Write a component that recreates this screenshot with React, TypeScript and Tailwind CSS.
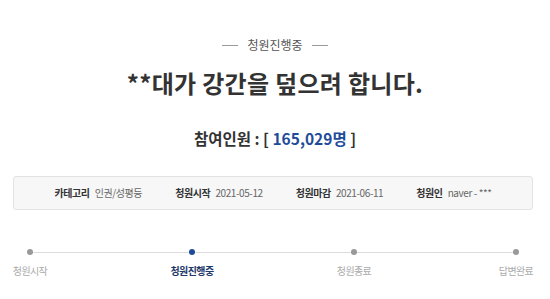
import React from "react";

const font = { fontFamily: '"Noto Sans CJK KR", "Noto Sans", sans-serif' };

export default function App() {
  const steps = [
    { label: "청원시작", active: false },
    { label: "청원진행중", active: true },
    { label: "청원종료", active: false },
    { label: "답변완료", active: false },
  ];
  const info = [
    ["카테고리", "인권/성평등"],
    ["청원시작", "2021-05-12"],
    ["청원마감", "2021-06-11"],
    ["청원인", "naver - ***"],
  ];
  return (
    <div className="w-[550px] h-[299px] bg-white overflow-hidden flex flex-col" style={font}>
      <div className="pt-[37px] flex items-center justify-center gap-[9px]">
        <div className="w-[16px] h-px bg-[#9a9a9a]" />
        <div className="text-[12px] leading-[16px] text-[#555]">청원진행중</div>
        <div className="w-[16px] h-px bg-[#9a9a9a]" />
      </div>
      <div className="mt-[14px] text-center text-[24px] leading-[32px] font-bold text-[#333] tracking-[0.3px]">
        **대가 강간을 덮으려 합니다.
      </div>
      <div className="mt-[28px] text-center text-[15.5px] leading-[22px] font-bold text-[#333]">
        참여인원 : [ <span className="text-[#1f4c99]">165,029명</span> ]
      </div>
      <div className="mt-[27px] ml-[13px] mr-[17px] h-[34px] bg-[#f7f7f7] border border-[#e3e3e3] rounded-[3px] flex items-center justify-center gap-[33px]">
        {info.map(([k, v]) => (
          <div key={k} className="flex items-center gap-[5px] text-[10px] leading-[14px] tracking-[-0.4px]">
            <span className="font-bold text-[#333]">{k}</span>
            <span className="text-[#666]">{v}</span>
          </div>
        ))}
      </div>
      <div className="mt-[39px] pr-[4px] flex items-start">
        {steps.map((s, i) => (
          <React.Fragment key={s.label}>
            {i > 0 && <div className="flex-1 h-px bg-[#dcdcdc] mt-[2.5px] -mx-[30px]" />}
            <div className="w-[60px] flex flex-col items-center relative">
              <div className={`w-[6px] h-[6px] rounded-full ${s.active ? "bg-[#1f4c99]" : "bg-[#999]"}`} />
              <div
                className={`mt-[9px] text-[10px] leading-[14px] tracking-[-0.6px] ${
                  s.active ? "font-bold text-[#1f3a6b]" : "text-[#aaa]"
                }`}
              >
                {s.label}
              </div>
            </div>
          </React.Fragment>
        ))}
      </div>
    </div>
  );
}
